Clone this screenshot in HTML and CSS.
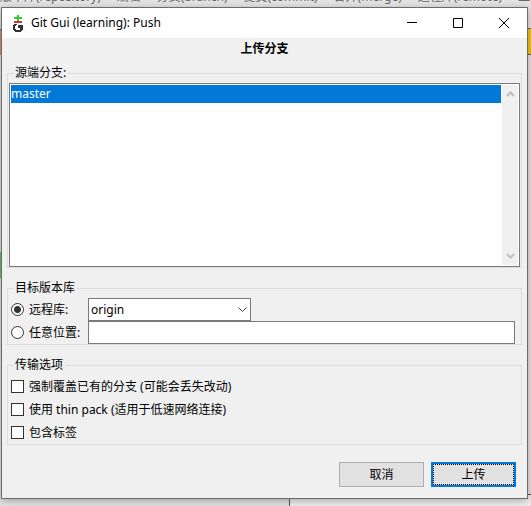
FILE: index.html
```html
<!DOCTYPE html>
<html lang="zh-CN">
<head>
<meta charset="utf-8">
<title>Git Gui (learning): Push</title>
<link rel="stylesheet" href="styles.css">
</head>
<body>
<div class="backdrop" aria-hidden="true">
  <div class="menubar"><span>版本库(repository)</span><span>编辑</span><span>分支(branch)</span><span>提交(commit)</span><span>合并(merge)</span><span>远程库(remote)</span><span>工具</span></div>
  <div class="pane pane-red"></div>
  <div class="pane pane-green"></div>
  <div class="pane pane-yellow"></div>
  <div class="pane pane-bottom"></div>
</div>
<main class="window">
  <header class="titlebar">
    <svg class="logo" width="12" height="17" viewBox="0 0 12 17" shape-rendering="crispEdges">
      <path fill="#33cc33" d="M5 0h2v2h3v2H7v2H5V4H2V2h3z"/>
      <path fill="#cc3333" d="M2 6h8v2H2z"/>
      <path fill="#333" d="M2 9h3v1H4v1H3v3h1v1h4v-2H6v-3h5v5h-1v1H9v1H3v-1H2v-1H1v-5h1z"/>
    </svg>
    <h1 class="title">Git Gui (learning): Push</h1>
    <button class="caption" aria-label="最小化"><svg width="10" height="10" viewBox="0 0 10 10"><path d="M0 4.5h10"/></svg></button>
    <button class="caption" aria-label="最大化"><svg width="10" height="10" viewBox="0 0 10 10"><path d="M.5.5h9v9h-9z"/></svg></button>
    <button class="caption" aria-label="关闭"><svg width="10" height="10" viewBox="0 0 10 10"><path d="M0 0l10 10M10 0L0 10"/></svg></button>
  </header>
  <form class="content">
    <h2 class="heading">上传分支</h2>
    <fieldset class="group">
      <legend>源端分支:</legend>
      <div class="listbox">
        <ul class="items" role="listbox" aria-label="源端分支">
          <li class="item" role="option" aria-selected="true">master</li>
        </ul>
        <div class="scrollbar">
          <svg width="9" height="6" viewBox="0 0 9 6"><path d="M1 5l3.500-3.500L8 5"/></svg>
          <svg width="9" height="6" viewBox="0 0 9 6"><path d="M1 1l3.500 3.500L8 1"/></svg>
        </div>
      </div>
    </fieldset>
    <fieldset class="group">
      <legend>目标版本库</legend>
      <div class="row">
        <label class="choice target"><input type="radio" name="dest" checked>远程库:</label>
        <div class="combo">
          <select class="select" aria-label="远程库"><option>origin</option></select>
          <svg class="chevron" width="9" height="6" viewBox="0 0 9 6"><path d="M.5.5l4 4 4-4"/></svg>
        </div>
      </div>
      <div class="row">
        <label class="choice target"><input type="radio" name="dest">任意位置:</label>
        <input class="field" type="text" aria-label="任意位置">
      </div>
    </fieldset>
    <fieldset class="group">
      <legend>传输选项</legend>
      <label class="choice"><input type="checkbox">强制覆盖已有的分支 (可能会丢失改动)</label>
      <label class="choice"><input type="checkbox">使用 thin pack (适用于低速网络连接)</label>
      <label class="choice"><input type="checkbox">包含标签</label>
    </fieldset>
    <div class="actions">
      <button class="button" type="button">取消</button>
      <button class="button primary" type="button">上传</button>
    </div>
  </form>
</main>
</body>
</html>
```
FILE: styles.css
```css
* { box-sizing: border-box; }
body, button, input, select {
  font: 12px/16px "Noto Sans", "Noto Sans CJK SC", sans-serif;
  color: #000;
}
body {
  margin: 0;
  min-height: 100vh;
  padding: 7px 3px 7px 1px;
  background: #d8d8d8;
  overflow: hidden;
}
.backdrop {
  position: absolute;
  inset: 0;
  overflow: hidden;
  background: #e4e4e4;
}
.menubar {
  display: flex;
  gap: 16px;
  margin: -11px 0 0 0;
  white-space: nowrap;
  color: #666;
}
.pane { position: absolute; }
.pane-red { left: 0; top: 29px; width: 8px; height: 26px; background: #e88a68; border-top: 1px solid #555; }
.pane-green { left: 0; top: 252px; width: 8px; height: 26px; background: #5fc864; }
.pane-yellow { right: 0; top: 28px; width: 8px; height: 27px; background: #f0ca00; border: solid #666; border-width: 1px 0; }
.pane-bottom { left: 289px; right: 0; top: 494px; bottom: 0; background: #efefef; border: solid #555; border-width: 1px 0 0 1px; }
.window {
  position: relative;
  background: #f0f0f0;
  border: 1px solid #6b6b6b;
  box-shadow: 0 2px 8px rgba(0, 0, 0, .3);
}
.titlebar {
  display: flex;
  align-items: center;
  height: 30px;
  padding-left: 10px;
  background: #fff;
}
.title { flex: 1; margin: 0 0 0 7px; font-size: 12px; font-weight: 400; }
.caption {
  display: grid;
  place-items: center;
  width: 46px;
  height: 30px;
  padding: 0;
  border: 0;
  background: none;
}
.caption path { fill: none; stroke: #000; }
.content { padding: 0 5px 11px; }
.heading { margin: 0; padding: 3px 0 8px; font-size: 12px; line-height: 16px; text-align: center; }
.group {
  min-width: 0;
  margin: 0 0 12px;
  padding: 2px 1px 0;
  border: 1px solid #dcdcdc;
}
.group legend { margin-left: 5px; padding: 0 2px 0 1px; }
.listbox {
  display: flex;
  height: 184px;
  padding: 1px;
  background: #fff;
  border: 1px solid #7a7a7a;
}
.items { flex: 1; margin: 0; padding: 0; list-style: none; }
.item { height: 18px; line-height: 18px; background: #0078d7; color: #fff; }
.scrollbar {
  display: flex;
  flex-direction: column;
  justify-content: space-between;
  align-items: center;
  width: 16px;
  margin-left: 1px;
  padding: 6px 0;
  background: #f0f0f0;
}
.scrollbar path { fill: none; stroke: #bfbfbf; stroke-width: 2; }
.row { display: flex; }
.choice { display: flex; align-items: center; gap: 5px; height: 23px; padding-left: 2px; }
.target { width: 79px; }
.choice input {
  appearance: none;
  flex: none;
  width: 13px;
  height: 13px;
  margin: 0;
  border: 1px solid #333;
  background: #fff;
}
.choice input[type="radio"] { border-radius: 50%; }
.choice input[type="radio"]:checked { background: radial-gradient(circle, #333 3px, #fff 4px); }
.combo { position: relative; width: 163px; height: 23px; }
.select {
  appearance: none;
  width: 100%;
  height: 100%;
  padding: 0 20px 0 2px;
  border: 1px solid #7a7a7a;
  border-radius: 0;
  background: #fff;
}
.chevron { position: absolute; right: 4px; top: 9px; pointer-events: none; }
.chevron path { fill: none; stroke: #444; }
.field {
  flex: 1;
  min-width: 0;
  height: 23px;
  margin-right: 5px;
  padding: 0 3px;
  border: 1px solid #7a7a7a;
}
.actions { display: flex; justify-content: flex-end; gap: 7px; margin: 17px 6px 0 0; }
.button {
  width: 85px;
  height: 25px;
  padding: 0;
  border: 1px solid #adadad;
  background: #e1e1e1;
}
.primary { border: 2px solid #0078d7; outline: 1px dotted #000; outline-offset: -3px; }
```
